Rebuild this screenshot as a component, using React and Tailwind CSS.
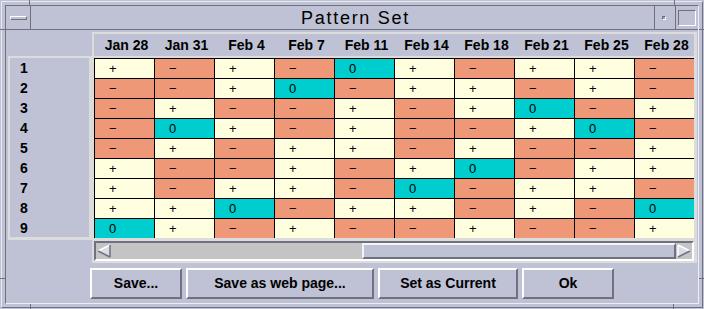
import React from 'react';

const dates = ['Jan 28', 'Jan 31', 'Feb 4', 'Feb 7', 'Feb 11', 'Feb 14', 'Feb 18', 'Feb 21', 'Feb 25', 'Feb 28'];

const rows = [
  '+-+-0+-++-',
  '--+0-++-+-',
  '-+--+-+0-+',
  '-0+-+--+0-',
  '-+-++-+--+',
  '+--+-+0-++',
  '+-++-0-++-',
  '++0-++-+-0',
  '0+-+--+--+',
];

const cellStyle = {
  '+': { bg: 'bg-[#ffffe0]', label: '+' },
  '-': { bg: 'bg-[#ee9877]', label: '\u2212' },
  '0': { bg: 'bg-[#00cdcd]', label: '0' },
};

const Arrow = ({ dir }) => (
  <svg width="16" height="16" viewBox="0 0 16 16" className="shrink-0">
    <rect width="16" height="16" fill="#c4c4c4" />
    {dir === 'left' ? (
      <g>
        <polygon points="2,8 14,2 14,14" fill="#d9dbe5" />
        <line x1="2" y1="8" x2="14" y2="2" stroke="#ffffff" strokeWidth="1.5" />
        <line x1="2" y1="8" x2="14" y2="14" stroke="#6f7180" strokeWidth="1.5" />
        <line x1="14" y1="2" x2="14" y2="14" stroke="#6f7180" strokeWidth="1.5" />
      </g>
    ) : (
      <g>
        <polygon points="14,8 2,2 2,14" fill="#d9dbe5" />
        <line x1="2" y1="2" x2="14" y2="8" stroke="#ffffff" strokeWidth="1.5" />
        <line x1="2" y1="2" x2="2" y2="14" stroke="#ffffff" strokeWidth="1.5" />
        <line x1="2" y1="14" x2="14" y2="8" stroke="#6f7180" strokeWidth="1.5" />
      </g>
    )}
  </svg>
);

const Button = ({ children, w }) => (
  <button className={`${w} h-[31px] bg-[#bec2d4] border-2 border-t-white border-l-white border-b-[#6f7180] border-r-[#6f7180] text-[14px] font-bold text-black flex items-center justify-center`}>
    {children}
  </button>
);

export default function App() {
  return (
    <div className="w-[704px] h-[309px] bg-[#bec2d4] relative overflow-hidden font-['Liberation_Sans',Arial,sans-serif] text-black">
      <div className="h-full p-[1px]">
        <div className="h-full p-[3px] border border-t-[#e8eaf2] border-l-[#e8eaf2] border-b-[#6f7180] border-r-[#6f7180]">
          <div className="h-full flex flex-col border border-t-[#6f7180] border-l-[#6f7180] border-b-[#eceef4] border-r-[#eceef4]">
            {/* title bar */}
            <div className="h-[24px] flex border-b border-[#6f7180] shrink-0">
              <div className="w-[25px] shrink-0 border-r border-[#6f7180] flex items-center justify-center">
                <div className="w-[17px] h-[4px] mt-[1px] border border-t-white border-l-white border-b-[#6f7180] border-r-[#6f7180]" />
              </div>
              <div className="flex-1 border-r border-[#6f7180] flex items-center justify-center pl-[26px] text-[18px] tracking-[1.7px] leading-none">
                Pattern Set
              </div>
              <div className="w-[21px] shrink-0 border-r border-[#6f7180] flex items-center justify-center pr-[3px]">
                <div className="w-[4px] h-[4px] mt-[1px] border border-t-[#6f7180] border-l-[#6f7180] border-b-white border-r-white bg-[#9a9cae]" />
              </div>
              <div className="w-[22px] shrink-0 flex items-center justify-center">
                <div className="w-[18px] h-[16px] mt-[1px] border border-t-[#6f7180] border-l-[#6f7180] border-b-white border-r-white" />
              </div>
            </div>

            {/* content */}
            <div className="flex flex-col pl-[2px] pt-[2px]">
              {/* header */}
              <div className="flex h-[24px]">
                <div className="w-[84px]" />
                <div className="w-[605px] bg-[#dcdcdc] pl-[2px] pt-[2px] pr-[3px]">
                  <div className="h-full bg-[#bec2d4] flex overflow-hidden">
                    {dates.map((d) => (
                      <div key={d} className="w-[60px] shrink-0 flex items-center justify-center pl-[5px] text-[14px] font-bold">
                        {d}
                      </div>
                    ))}
                  </div>
                </div>
              </div>

              {/* body */}
              <div className="flex w-[689px] h-[184px] bg-[#dcdcdc] pt-[2px]">
                <div className="ml-[2px] w-[79px] h-[179px] bg-[#bec2d4] flex flex-col">
                  {rows.map((_, i) => (
                    <div key={i} className="h-[20px] shrink-0 flex items-center pl-[10px] text-[14px] font-bold">
                      {i + 1}
                    </div>
                  ))}
                </div>
                <div className="ml-[5px] w-[600px] h-[180px] overflow-hidden">
                  <div className="w-[601px] border-t border-l border-black">
                    {rows.map((r, i) => (
                      <div key={i} className="flex">
                        {r.split('').map((c, j) => (
                          <div
                            key={j}
                            className={`w-[60px] h-[20px] shrink-0 border-r border-b border-black flex items-center pl-[14px] text-[13px] leading-none ${cellStyle[c].bg}`}
                          >
                            {cellStyle[c].label}
                          </div>
                        ))}
                      </div>
                    ))}
                  </div>
                </div>
              </div>

              {/* scrollbar */}
              <div className="flex h-[23px]">
                <div className="w-[84px]" />
                <div className="w-[605px] bg-[#dcdcdc] pl-[2px] pt-[1px] pr-[3px] pb-[2px]">
                  <div className="h-[20px] flex border-2 border-t-[#6f7180] border-l-[#6f7180] border-b-white border-r-white bg-[#c4c4c4]">
                    <Arrow dir="left" />
                    <div className="w-[250px] shrink-0" />
                    <div className="flex-1 bg-[#bec2d4] border-2 border-t-[#f4f4f8] border-l-[#f4f4f8] border-b-[#6f7180] border-r-[#6f7180]" />
                    <Arrow dir="right" />
                  </div>
                </div>
              </div>

              {/* buttons */}
              <div className="flex gap-[4px] pl-[82px] mt-[5px]">
                <Button w="w-[92px]">Save...</Button>
                <Button w="w-[188px]">Save as web page...</Button>
                <Button w="w-[140px]">Set as Current</Button>
                <Button w="w-[92px]">Ok</Button>
              </div>
            </div>
          </div>
        </div>
      </div>

      {/* frame notches */}
      <div className="absolute left-[29px] top-0 w-[1px] h-[5px] bg-[#6f7180]" />
      <div className="absolute left-[674px] top-0 w-[1px] h-[5px] bg-[#6f7180]" />
      <div className="absolute left-0 top-[29px] w-[5px] h-[1px] bg-[#6f7180]" />
      <div className="absolute right-0 top-[29px] w-[5px] h-[1px] bg-[#6f7180]" />
      <div className="absolute left-0 top-[278px] w-[5px] h-[1px] bg-[#6f7180]" />
      <div className="absolute right-0 top-[278px] w-[5px] h-[1px] bg-[#6f7180]" />
      <div className="absolute left-[30px] bottom-0 w-[1px] h-[5px] bg-[#6f7180]" />
      <div className="absolute left-[673px] bottom-0 w-[1px] h-[5px] bg-[#6f7180]" />
    </div>
  );
}
